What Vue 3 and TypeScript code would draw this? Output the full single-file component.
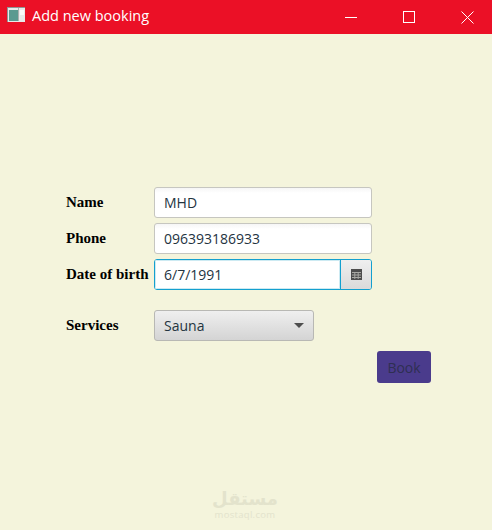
<script setup lang="ts">
import { ref } from 'vue'

const name = ref('MHD')
const phone = ref('096393186933')
const birth = ref('6/7/1991')
</script>

<template>
  <div class="window">
    <header class="titlebar">
      <svg class="app-icon" width="18" height="15" viewBox="0 0 18 15">
        <rect x="0" y="0" width="18" height="15" fill="#e8eaea" />
        <rect x="0" y="0" width="18" height="1" fill="#8d9695" />
        <rect x="0" y="0" width="1" height="15" fill="#8d9695" />
        <rect x="2" y="3" width="9" height="11" fill="#5a9a90" />
        <rect x="11" y="1" width="1" height="13" fill="#a9b0ae" />
        <rect x="13" y="3" width="4" height="5" fill="#fafafa" />
      </svg>
      <span class="title">Add new booking</span>
      <div class="controls">
        <button class="control">
          <svg width="12" height="12" viewBox="0 0 12 12"><path d="M0 6.5H12" stroke="#fff" fill="none" /></svg>
        </button>
        <button class="control">
          <svg width="12" height="12" viewBox="0 0 12 12"><rect x="0.5" y="0.5" width="11" height="11" stroke="#fff" fill="none" /></svg>
        </button>
        <button class="control">
          <svg width="13" height="13" viewBox="0 0 13 13"><path d="M0.5 0.5L12.5 12.5M12.5 0.5L0.5 12.5" stroke="#fff" fill="none" /></svg>
        </button>
      </div>
    </header>

    <main class="form">
      <div class="row">
        <label class="label">Name</label>
        <input v-model="name" class="field" />
      </div>

      <div class="row">
        <label class="label">Phone</label>
        <input v-model="phone" class="field" />
      </div>

      <div class="row">
        <label class="label">Date of birth</label>
        <div class="date-picker">
          <input v-model="birth" class="date-input" />
          <span class="date-button">
            <svg width="11" height="11" viewBox="0 0 11 11">
              <rect width="11" height="11" fill="#4d4d4d" />
              <path d="M1 3.5H10M1 6H10M1 8.5H10M3.8 3V10M7.2 3V10" stroke="#a9a9a4" stroke-width="1" fill="none" />
            </svg>
          </span>
        </div>
      </div>

      <div class="row services">
        <label class="label">Services</label>
        <div class="combo">
          <span>Sauna</span>
          <i class="arrow"></i>
        </div>
      </div>

      <div class="actions">
        <button class="book">Book</button>
      </div>
    </main>

    <div class="watermark">
      <span class="mark-ar">مستقل</span>
      <span class="mark-en">mostaql.com</span>
    </div>
  </div>
</template>

<style>
html,
body {
  margin: 0;
  background: #f4f4dc;
}
</style>

<style scoped>
.window {
  position: relative;
  width: 492px;
  height: 530px;
  overflow: hidden;
  background: #f4f4dc;
  font-family: "Open Sans", "Noto Sans", sans-serif;
}

.titlebar {
  height: 34px;
  display: flex;
  align-items: center;
  padding-left: 7px;
  background: #eb1026;
  color: #fff;
}

.app-icon {
  margin: 0 7px 5px 0;
}

.title {
  font-size: 14.5px;
  line-height: 20px;
  margin-bottom: 2px;
}

.controls {
  margin-left: auto;
  margin-right: -4px;
  display: flex;
}

.control {
  width: 58px;
  height: 34px;
  padding: 0;
  border: 0;
  background: none;
  display: flex;
  align-items: center;
  justify-content: center;
}

.form {
  display: flex;
  flex-direction: column;
  gap: 5px;
  padding: 153px 0 0 66px;
}

.row {
  display: flex;
  align-items: center;
  height: 31px;
}

.services {
  margin-top: 15px;
}

.label {
  width: 88px;
  flex: none;
  font: bold 15px "Liberation Serif", serif;
  color: #000;
  white-space: nowrap;
}

.field,
.date-input {
  font-family: inherit;
  font-size: 14px;
  color: #24343f;
  outline: none;
}

.field {
  box-sizing: border-box;
  width: 218px;
  height: 31px;
  padding: 0 9px;
  border: 1px solid #c6c6c0;
  border-radius: 3px;
  background: linear-gradient(#f6f6f6, #fff 5px);
}

.date-picker {
  box-sizing: border-box;
  width: 218px;
  height: 31px;
  display: flex;
  border: 1px solid #13a0cf;
  border-radius: 3px;
  overflow: hidden;
}

.date-input {
  flex: 1;
  min-width: 0;
  padding: 0 9px;
  border: 0;
  border-right: 1px solid #13a0cf;
  background: #fff;
  box-shadow: inset 0 0 0 1px #cdeaf2;
}

.date-button {
  width: 30px;
  display: flex;
  align-items: center;
  justify-content: center;
  background: linear-gradient(#efefef, #dadada);
}

.combo {
  box-sizing: border-box;
  width: 160px;
  height: 31px;
  padding: 0 9px;
  display: flex;
  align-items: center;
  justify-content: space-between;
  border: 1px solid #b8b8b4;
  border-radius: 3px;
  background: linear-gradient(#efefef, #d4d4d4);
  font-size: 14px;
  color: #24343f;
}

.arrow {
  width: 0;
  height: 0;
  border-left: 5px solid transparent;
  border-right: 5px solid transparent;
  border-top: 5px solid #4e4e4e;
}

.actions {
  margin-top: 5px;
  padding-left: 311px;
}

.book {
  display: block;
  width: 54px;
  height: 32px;
  padding: 0;
  border: 0;
  border-radius: 3px;
  background: #4a3b8c;
  color: #2f2f52;
  font-family: inherit;
  font-size: 14px;
}

.watermark {
  position: absolute;
  left: 207px;
  top: 488px;
  width: 76px;
  display: flex;
  flex-direction: column;
  align-items: center;
  color: #e3e3cc;
}

.mark-ar {
  font: bold 18px/22px "DejaVu Sans", sans-serif;
}

.mark-en {
  font: 9.5px/10px "Open Sans", sans-serif;
  letter-spacing: 0.3px;
}
</style>
